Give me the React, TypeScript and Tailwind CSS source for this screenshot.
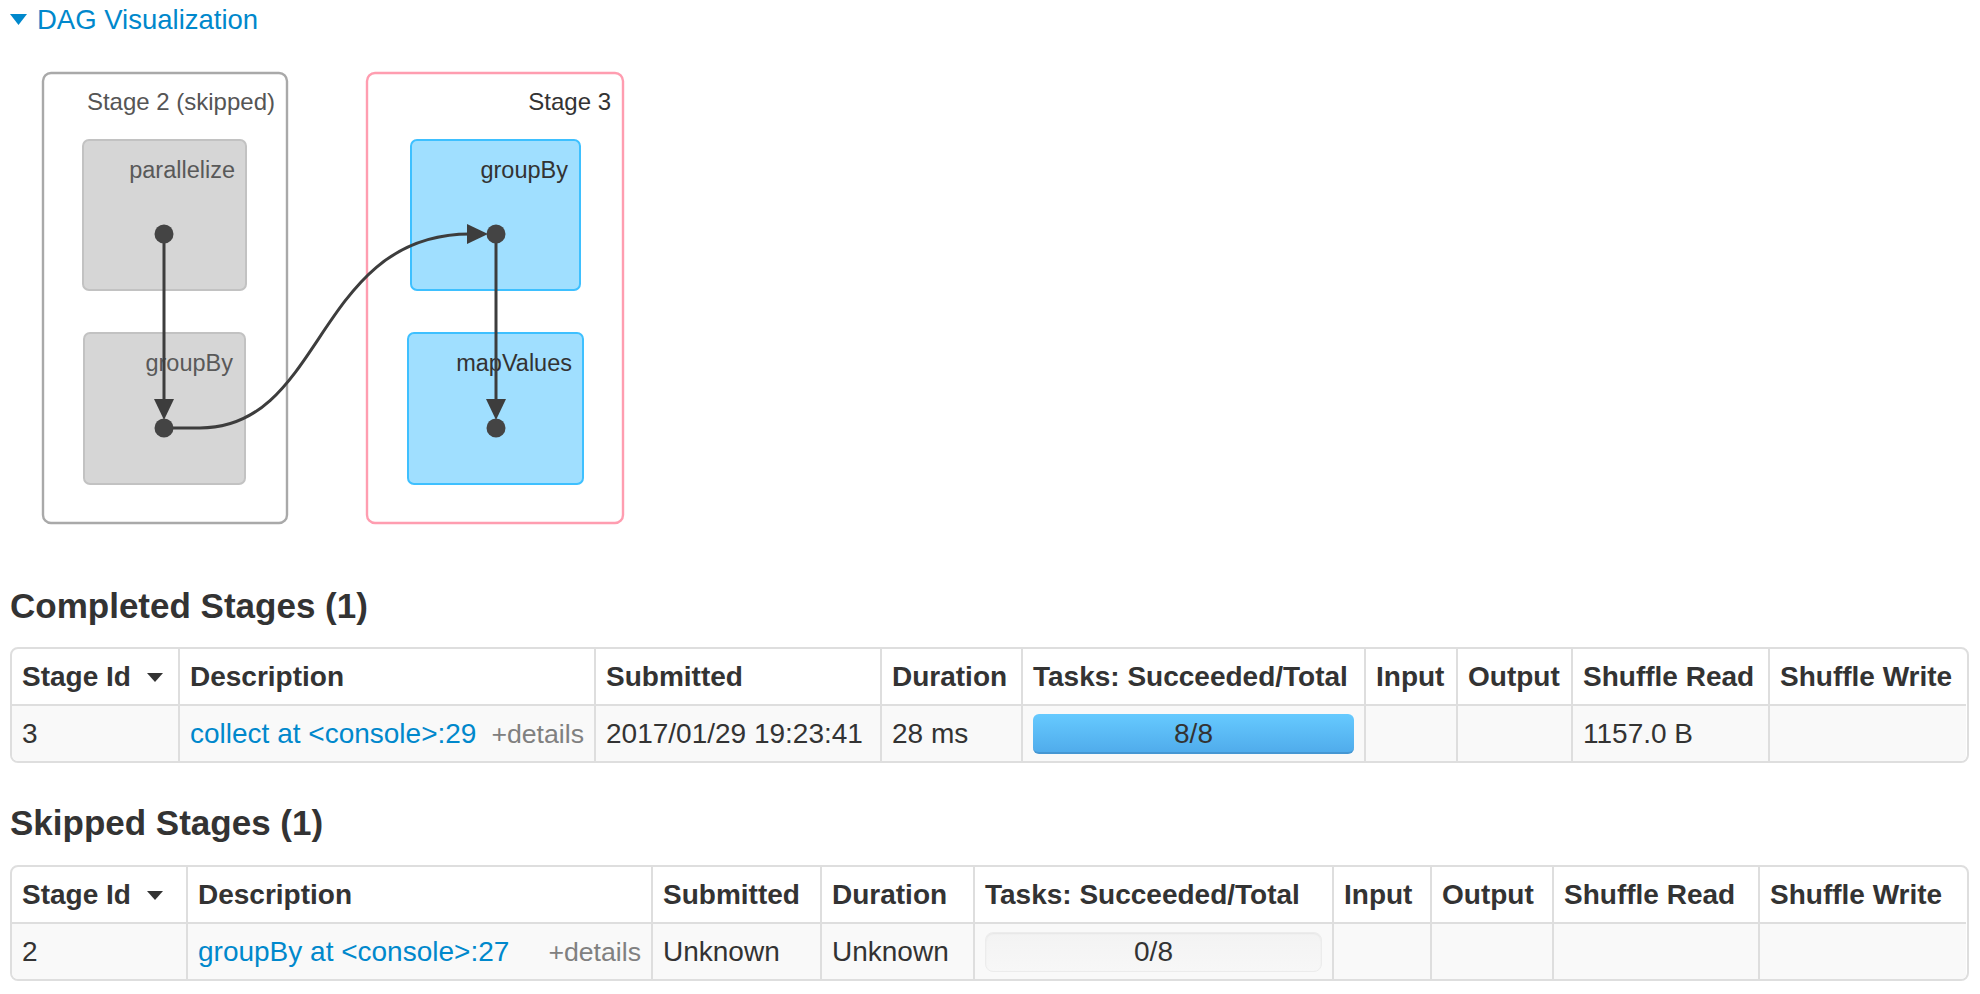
import React from "react";

type Row = {
  id: string;
  desc: string;
  submitted: string;
  duration: string;
  tasks: string;
  done: boolean;
  shuffleRead: string;
};

const headers = [
  "Stage Id",
  "Description",
  "Submitted",
  "Duration",
  "Tasks: Succeeded/Total",
  "Input",
  "Output",
  "Shuffle Read",
  "Shuffle Write",
];

function SortArrow() {
  return (
    <svg width="16" height="10" viewBox="0 0 16 10" className="ml-[16px] inline-block">
      <path d="M0 1 L16 1 L8 10 Z" fill="#333" />
    </svg>
  );
}

function Progress({ label, done }: { label: string; done: boolean }) {
  if (done) {
    return (
      <div className="flex h-[40px] w-full items-center justify-center rounded-[6px] border-b-2 border-[#4597d3] bg-gradient-to-b from-[#66caff] to-[#50acec] pt-[2px] text-[28px] leading-none text-[#333]">
        {label}
      </div>
    );
  }
  return (
    <div className="flex h-[40px] w-full items-center justify-center rounded-[8px] border border-[#ececec] bg-gradient-to-b from-[#f3f3f3] to-[#f7f7f7] text-[28px] leading-none text-[#333] shadow-[inset_0_1px_2px_rgba(0,0,0,0.06)]">
      {label}
    </div>
  );
}

function StageTable({ cols, row }: { cols: string; row: Row }) {
  const head = "flex h-[57px] items-center border-b-2 border-[#dedede] px-[10px] text-[28px] font-bold whitespace-nowrap";
  const cell = "flex h-[55px] items-center bg-[#f9f9f9] px-[10px] text-[28px] whitespace-nowrap";
  return (
    <div className="overflow-hidden rounded-[8px] border-2 border-[#dedede]">
      <div className={cols}>
        {headers.map((h, i) => (
          <div key={h} className={i === 0 ? head : head + " border-l-2"}>
            {h}
            {i === 0 && <SortArrow />}
          </div>
        ))}
        <div className={cell}>{row.id}</div>
        <div className={cell + " border-l-2 border-[#dedede] justify-between"}>
          <a className="text-[#0088cc]">{row.desc}</a>
          <span className="text-[26.67px] text-[#808080]">+details</span>
        </div>
        <div className={cell + " border-l-2 border-[#dedede]"}>{row.submitted}</div>
        <div className={cell + " border-l-2 border-[#dedede]"}>{row.duration}</div>
        <div className={cell + " border-l-2 border-[#dedede]"}>
          <Progress label={row.tasks} done={row.done} />
        </div>
        <div className={cell + " border-l-2 border-[#dedede]"}></div>
        <div className={cell + " border-l-2 border-[#dedede]"}></div>
        <div className={cell + " border-l-2 border-[#dedede]"}>{row.shuffleRead}</div>
        <div className={cell + " border-l-2 border-[#dedede]"}></div>
      </div>
    </div>
  );
}

function Dag() {
  const edge = "#3d3d3d";
  return (
    <svg width="640" height="520" viewBox="0 40 640 520" className="-ml-[10px] block">
      {/* stage clusters */}
      <rect x="43" y="73" width="244" height="450" rx="8" fill="white" stroke="#a9a9a9" strokeWidth="2.4" />
      <rect x="367" y="73" width="256" height="450" rx="8" fill="white" stroke="#ff9db0" strokeWidth="2.4" />
      <text x="275" y="110" textAnchor="end" fontSize="24" fill="#555">Stage 2 (skipped)</text>
      <text x="611" y="110" textAnchor="end" fontSize="24" fill="#333">Stage 3</text>

      {/* nodes */}
      <rect x="83" y="140" width="163" height="150" rx="6" fill="#d6d6d6" stroke="#c2c2c2" strokeWidth="2" />
      <rect x="84" y="333" width="161" height="151" rx="6" fill="#d6d6d6" stroke="#c2c2c2" strokeWidth="2" />
      <rect x="411" y="140" width="169" height="150" rx="6" fill="#a0dfff" stroke="#3ec0ff" strokeWidth="2" />
      <rect x="408" y="333" width="175" height="151" rx="6" fill="#a0dfff" stroke="#3ec0ff" strokeWidth="2" />
      <text x="235" y="178" textAnchor="end" fontSize="23.5" fill="#595959">parallelize</text>
      <text x="233" y="371" textAnchor="end" fontSize="23.5" fill="#595959">groupBy</text>
      <text x="568" y="178" textAnchor="end" fontSize="23.5" fill="#333">groupBy</text>
      <text x="572" y="371" textAnchor="end" fontSize="23.5" fill="#333">mapValues</text>

      {/* edges */}
      <line x1="164" y1="234" x2="164" y2="402" stroke={edge} strokeWidth="3" />
      <path d="M154 399 L174 399 L164 420 Z" fill={edge} />
      <line x1="496" y1="234" x2="496" y2="402" stroke={edge} strokeWidth="3" />
      <path d="M486 399 L506 399 L496 420 Z" fill={edge} />
      <path d="M164 428 L200 428 C325 428 315 234 470 234" fill="none" stroke={edge} strokeWidth="3" />
      <path d="M467 224 L467 244 L488 234 Z" fill={edge} />

      {/* dots */}
      <circle cx="164" cy="234" r="9.5" fill="#444" />
      <circle cx="164" cy="428" r="9.5" fill="#444" />
      <circle cx="496" cy="234" r="9.5" fill="#444" />
      <circle cx="496" cy="428" r="9.5" fill="#444" />
    </svg>
  );
}

export default function App() {
  return (
    <div className="min-h-screen w-[1980px] bg-white pl-[10px] pr-[11px] font-['Liberation_Sans',Arial,sans-serif] text-[#333]">
      <div className="flex h-[40px] items-center">
        <svg width="17" height="11" viewBox="0 0 17 11" className="mt-[-2px]">
          <path d="M0 0 L17 0 L8.5 11 Z" fill="#0088cc" />
        </svg>
        <span className="ml-[10px] text-[27.5px] leading-none text-[#0088cc]">DAG Visualization</span>
      </div>

      <Dag />

      <h4 className="mt-[26px] h-[40px] text-[35px] font-bold leading-[40px]">Completed Stages (1)</h4>
      <div className="mt-[21px]">
        <StageTable
          cols="grid grid-cols-[166px_416px_286px_141px_343px_92px_115px_197px_198px] border-[#dedede]"
          row={{
            id: "3",
            desc: "collect at <console>:29",
            submitted: "2017/01/29 19:23:41",
            duration: "28 ms",
            tasks: "8/8",
            done: true,
            shuffleRead: "1157.0 B",
          }}
        />
      </div>

      <h4 className="mt-[40px] h-[40px] text-[35px] font-bold leading-[40px]">Skipped Stages (1)</h4>
      <div className="mt-[22px]">
        <StageTable
          cols="grid grid-cols-[174px_465px_169px_153px_359px_98px_122px_206px_208px] border-[#dedede]"
          row={{
            id: "2",
            desc: "groupBy at <console>:27",
            submitted: "Unknown",
            duration: "Unknown",
            tasks: "0/8",
            done: false,
            shuffleRead: "",
          }}
        />
      </div>
    </div>
  );
}
